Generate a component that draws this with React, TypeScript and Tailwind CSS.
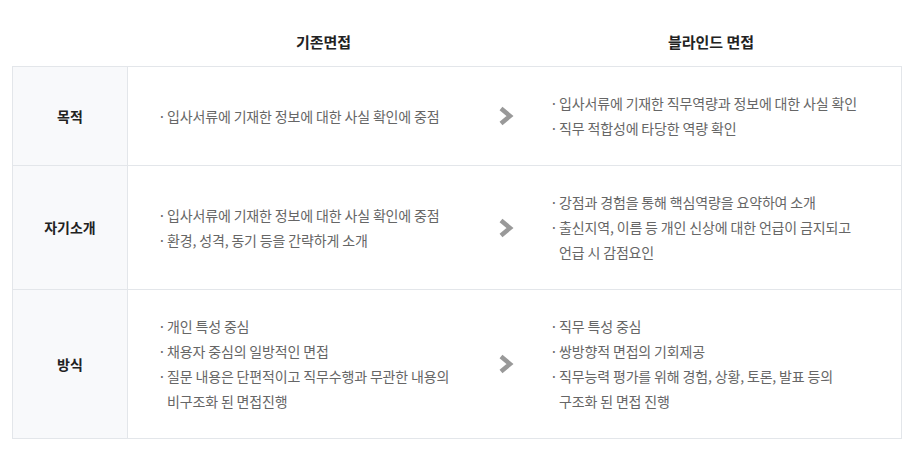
const rows = [
  {
    label: "목적",
    before: [["입사서류에 기재한 정보에 대한 사실 확인에 중점"]],
    after: [
      ["입사서류에 기재한 직무역량과 정보에 대한 사실 확인"],
      ["직무 적합성에 타당한 역량 확인"],
    ],
  },
  {
    label: "자기소개",
    before: [
      ["입사서류에 기재한 정보에 대한 사실 확인에 중점"],
      ["환경, 성격, 동기 등을 간략하게 소개"],
    ],
    after: [
      ["강점과 경험을 통해 핵심역량을 요약하여 소개"],
      ["출신지역, 이름 등 개인 신상에 대한 언급이 금지되고", "언급 시 감점요인"],
    ],
  },
  {
    label: "방식",
    before: [
      ["개인 특성 중심"],
      ["채용자 중심의 일방적인 면접"],
      ["질문 내용은 단편적이고 직무수행과 무관한 내용의", "비구조화 된 면접진행"],
    ],
    after: [
      ["직무 특성 중심"],
      ["쌍방향적 면접의 기회제공"],
      ["직무능력 평가를 위해 경험, 상황, 토론, 발표 등의", "구조화 된 면접 진행"],
    ],
  },
];

function Bullets({ items }: { items: string[][] }) {
  return (
    <ul className="text-[14px] leading-[25px] tracking-[-0.15px] text-[#666]">
      {items.map((lines, i) => (
        <li key={i} className="flex">
          <span className="w-[9px] shrink-0">·</span>
          <span>
            {lines.map((l, j) => (
              <span key={j} className="block">
                {l}
              </span>
            ))}
          </span>
        </li>
      ))}
    </ul>
  );
}

function Arrow() {
  return (
    <svg width="16" height="22" viewBox="0 0 16 22" className="shrink-0">
      <polyline
        points="3,3.5 12,11 3,18.5"
        fill="none"
        stroke="#999"
        strokeWidth="4.5"
        strokeLinejoin="miter"
      />
    </svg>
  );
}

export default function App() {
  return (
    <div
      className="h-[449px] w-[916px] bg-white"
      style={{ fontFamily: '"Noto Sans CJK KR", "Noto Sans", sans-serif' }}
    >
      <div className="ml-[12px] w-[890px]">
        <div className="grid grid-cols-[115px_393px_1fr] pt-[32px] pb-[14px] text-[15px] font-bold leading-[20px] text-[#222]">
          <div />
          <div className="text-center">기존면접</div>
          <div className="text-center">블라인드 면접</div>
        </div>

        <div className="border border-[#e3e6ea]">
          {rows.map((row, i) => (
            <div
              key={row.label}
              className={
                "grid grid-cols-[115px_393px_1fr] " +
                (i < rows.length - 1 ? "border-b border-[#e3e6ea]" : "")
              }
            >
              <div className="flex items-center justify-center border-r border-[#e3e6ea] bg-[#f8f9fb] text-[14px] font-bold text-[#222]">
                {row.label}
              </div>
              <div className="flex items-center justify-between py-6 pl-[30px] pr-[7px]">
                <Bullets items={row.before} />
                <Arrow />
              </div>
              <div className="flex items-center py-6 pl-[29px]">
                <Bullets items={row.after} />
              </div>
            </div>
          ))}
        </div>
      </div>
    </div>
  );
}
